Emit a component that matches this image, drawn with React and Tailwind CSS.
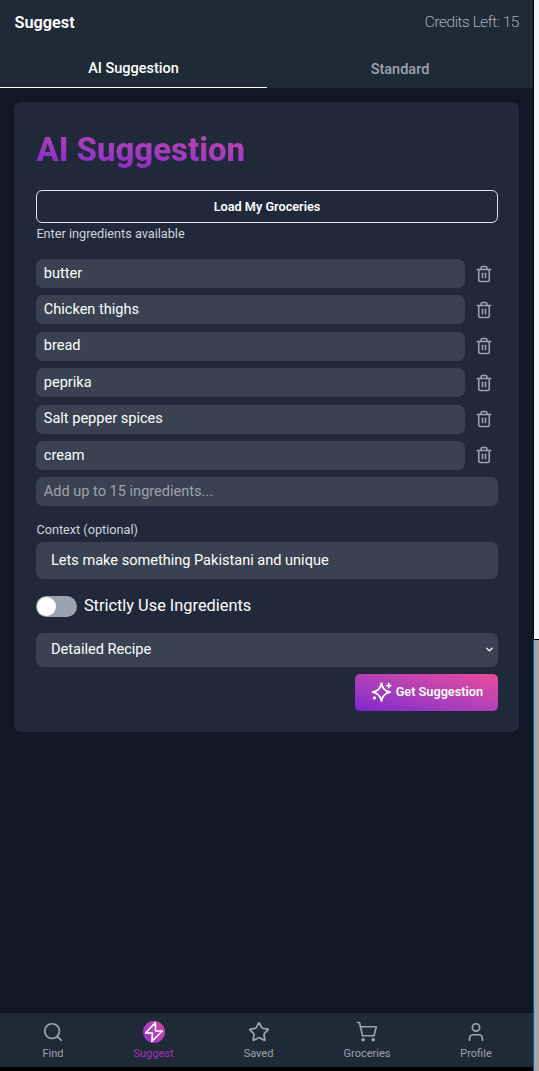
import { Trash2, Search, Star, User, ChevronDown } from 'lucide-react';

const ingredients = ['butter', 'Chicken thighs', 'bread', 'peprika', 'Salt pepper spices', 'cream'];

function Header() {
  return (
    <header className="h-[88px] shrink-0 bg-[#1f2a37]">
      <div className="flex h-[46px] items-center justify-between px-[14.5px]">
        <h1 className="text-[16.3px] font-semibold">Suggest</h1>
        <span className="mr-[-0.4px] text-[15.5px] font-extralight tracking-[-0.43px] text-[#d9dee5]">Credits Left: 15</span>
      </div>
      <nav className="flex h-[42px] text-[14.5px] font-medium">
        <button className="w-[267px] border-b border-white pt-[4px]">AI Suggestion</button>
        <button className="flex-1 pt-[5px] text-[#9ca3af]">Standard</button>
      </nav>
    </header>
  );
}

function IngredientRow({ name }) {
  return (
    <li className="flex items-center">
      <div className="flex h-[29px] w-[428.5px] items-center rounded-[7px] bg-[#384250] px-[7.4px]">{name}</div>
      <button className="ml-[10.6px] text-[#9ca3af]" aria-label="Remove">
        <Trash2 size={18} strokeWidth={2.1} />
      </button>
    </li>
  );
}

function NavItem({ label, className, children }) {
  return (
    <a className={`flex flex-col items-center ${className}`}>
      <span className="flex h-[22px] items-center">{children}</span>
      <span className="mt-[3px] text-[11px] leading-[16px]">{label}</span>
    </a>
  );
}

function Bolt() {
  return (
    <span className="flex size-[22px] items-center justify-center rounded-full bg-linear-to-tr from-[#9229cd] to-[#db429f]">
      <svg width="22" height="22" viewBox="0 0 22 22" fill="none" stroke="white" strokeWidth="1.7" strokeLinejoin="round">
        <path d="M12.3 1.7 2.7 12h6.8l-.6 8.3L19.3 10h-6.8z" />
      </svg>
    </span>
  );
}

function Cart() {
  return (
    <svg width="22" height="22" viewBox="0 0 22 22" fill="none" stroke="currentColor" strokeWidth="1.6" strokeLinecap="round" strokeLinejoin="round">
      <path d="M1.5 1.5h2l3 13.2h11.5L20.3 5.7H4.5" />
      <circle cx="7.1" cy="18.8" r="1.8" fill="currentColor" stroke="none" />
      <circle cx="17.2" cy="18.8" r="1.8" fill="currentColor" stroke="none" />
    </svg>
  );
}

function Sparks() {
  return (
    <svg className="shrink-0" width="22" height="22" viewBox="0 0 22 22" fill="none" stroke="white" strokeWidth="1.8" strokeLinecap="round" strokeLinejoin="round">
      <path d="M10.5 2.2C11.2 7.6 13.5 10.2 19.3 11.2C13.5 12.2 11.2 14.8 10.5 20.2C9.6 14.8 7.3 12.2 1.6 11.2C7.3 10.2 9.6 7.6 10.5 2.2Z" />
      <path d="M17.8 2.6v4M15.8 4.6h4" />
      <circle cx="3.5" cy="16.9" r="1.6" fill="white" stroke="none" />
    </svg>
  );
}

export default function App() {
  return (
    <div className="flex h-[1071px] w-[539px] overflow-hidden bg-black font-['Roboto',sans-serif] text-white">
      <div className="flex w-[533px] shrink-0 flex-col bg-[#101725]">
        <Header />
        <main className="flex-1 px-[14px] pt-[14px]">
          <section className="flex h-[630px] w-[505px] flex-col rounded-[7px] bg-[#1f293a] pt-[27px] pr-[21.4px] pl-[22.4px]">
            <h2 className="mb-[19px] h-[42px] w-[461px] bg-linear-to-tr from-[#7e22ce] to-[#ec4899] bg-clip-text text-[32.9px] leading-[42px] font-extrabold text-transparent">AI Suggestion</h2>
            <button className="h-[33px] shrink-0 rounded-[6px] border border-[#dce3ea] text-[12.7px] font-semibold">Load My Groceries</button>
            <p className="h-[36px] pt-[1px] text-[12.7px] leading-[20px] text-[#d1d5db]">Enter ingredients available</p>
            <ul className="flex flex-col gap-[7.4px] text-[14.55px]">
              {ingredients.map((name) => (
                <IngredientRow key={name} name={name} />
              ))}
            </ul>
            <div className="mt-[7.5px] flex h-[29px] shrink-0 items-center rounded-[7px] bg-[#384250] px-[7.4px] pb-[1px] text-[14.55px] text-[#9ca3af]">Add up to 15 ingredients...</div>
            <label className="mt-[14px] h-[22px] text-[12.7px] leading-[20px] text-[#d1d5db]">Context (optional)</label>
            <div className="flex h-[37px] shrink-0 items-center rounded-[7px] bg-[#384250] px-[14.6px] pb-[1px] text-[14.55px]">Lets make something Pakistani and unique</div>
            <div className="mt-[16px] flex h-[22px] shrink-0 items-center">
              <span className="flex h-[21px] w-[40.5px] items-center rounded-full bg-[#9ca3af] px-[1px]">
                <span className="size-[19px] rounded-full bg-white" />
              </span>
              <span className="ml-[7px] text-[16.35px]">Strictly Use Ingredients</span>
            </div>
            <div className="mt-[15.5px] flex h-[34px] shrink-0 items-center justify-between rounded-[7px] bg-[#384250] pr-[2.5px] pl-[14.6px] text-[14.55px]">
              <span>Detailed Recipe</span>
              <ChevronDown size={11} strokeWidth={3} />
            </div>
            <button className="mt-[7px] flex h-[37px] w-[142.2px] shrink-0 items-center self-end rounded-[5px] bg-linear-to-tr from-[#7e22ce] to-[#ec4899] pl-[15.3px] text-[12.7px] font-semibold">
              <Sparks />
              <span className="ml-[3px] pb-[1px] whitespace-nowrap">Get Suggestion</span>
            </button>
          </section>
        </main>
        <footer className="flex h-[54px] shrink-0 justify-between bg-[#1f2a37] pt-[8px] pr-[41px] pl-[42px] text-[#9ca3af]">
          <NavItem label="Find" className="w-[22px]"><Search size={22} strokeWidth={1.9} /></NavItem>
          <NavItem label="Suggest" className="w-[41px] text-[#a62fc0]"><Bolt /></NavItem>
          <NavItem label="Saved" className="w-[31px]"><Star size={22} strokeWidth={1.9} /></NavItem>
          <NavItem label="Groceries" className="w-[48px]"><Cart /></NavItem>
          <NavItem label="Profile" className="w-[32px]"><User size={22} strokeWidth={1.9} /></NavItem>
        </footer>
        <div className="h-[4px] shrink-0 bg-black" />
      </div>
      <div className="flex flex-1 flex-col">
        <div className="h-[640px] border-b border-l border-black bg-[#f3f3f3]" />
        <div className="flex-1 border-l border-[#07559c] bg-[#a6a6a6]" />
      </div>
    </div>
  );
}
